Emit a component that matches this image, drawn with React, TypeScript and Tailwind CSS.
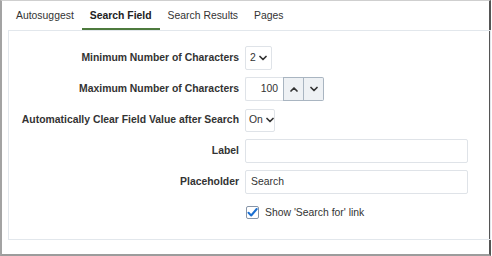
import React from "react";

const Chevron = ({ up = false }: { up?: boolean }) => (
  <svg width="8" height="6" viewBox="0 0 8 6" className="shrink-0">
    <path d={up ? "M1 5L4 2L7 5" : "M1 1.5L4 4.5L7 1.5"} fill="none" stroke="#333" strokeWidth="1.7" strokeLinecap="round" strokeLinejoin="round" />
  </svg>
);

const tabs = ["Autosuggest", "Search Field", "Search Results", "Pages"];

export default function App() {
  return (
    <div className="w-[492px] h-[256px] bg-white" style={{ fontFamily: '"Liberation Sans", Arial, sans-serif' }}>
      <div className="w-[491px] h-[256px] flex flex-col border-t border-t-[#cfcfcf] border-l-2 border-l-[#a3a3a3] border-r-2 border-r-[#555] border-b-2 border-b-[#9c9c9c] text-[10.4px] text-[#333]">
        <div className="flex h-[29px] pl-[6px]">
          {tabs.map((t) => (
            <div
              key={t}
              className={
                t === "Search Field"
                  ? "px-[8px] pt-[7px] font-bold text-[#222] border-b-2 border-[#4d7a3d]"
                  : "px-[8px] pt-[7px]"
              }
            >
              {t}
            </div>
          ))}
        </div>
        <div className="ml-[6px] mr-[-2px] h-[210px] border border-[#e2e7ec] pt-[15px]">
          <div className="grid grid-cols-[230px_223px] auto-rows-[24px] gap-x-[6px] gap-y-[7px] items-center">
            <div className="text-right font-bold">Minimum Number of Characters</div>
            <div>
              <div className="w-[27px] h-[24px] border border-[#dfe3e8] rounded-[2px] flex items-center gap-[3px] pl-[4px]">
                <span>2</span>
                <Chevron />
              </div>
            </div>

            <div className="text-right font-bold">Maximum Number of Characters</div>
            <div className="flex h-[24px]">
              <div className="w-[38px] border border-[#dfe3e8] border-r-0 rounded-l-[2px] flex items-center justify-end pr-[5px]">100</div>
              <div className="w-[21px] border border-[#a9b5c1] bg-[#eef1f4] flex items-center justify-center">
                <Chevron up />
              </div>
              <div className="w-[20px] border border-l-0 border-[#a9b5c1] bg-[#eef1f4] rounded-r-[2px] flex items-center justify-center">
                <Chevron />
              </div>
            </div>

            <div className="text-right font-bold">Automatically Clear Field Value after Search</div>
            <div>
              <div className="w-[30px] h-[23px] border border-[#dfe3e8] rounded-[2px] flex items-center gap-[3px] pl-[3px]">
                <span>On</span>
                <Chevron />
              </div>
            </div>

            <div className="text-right font-bold">Label</div>
            <div className="h-[24px] border border-[#dfe3e8] rounded-[2px]" />

            <div className="text-right font-bold">Placeholder</div>
            <div className="h-[24px] border border-[#dfe3e8] rounded-[2px] flex items-center pl-[5px]">Search</div>

            <div />
            <div className="flex items-center gap-[6px] pl-[1px]">
              <div className="w-[13px] h-[13px] border border-[#8795a8] rounded-[2px] bg-white flex items-center justify-center">
                <svg width="11" height="11" viewBox="0 0 11 11">
                  <path d="M1.5 5.8L4.2 8.5L9.7 2" fill="none" stroke="#1b6fd1" strokeWidth="2" strokeLinecap="round" strokeLinejoin="round" />
                </svg>
              </div>
              <span>Show 'Search for' link</span>
            </div>
          </div>
        </div>
      </div>
    </div>
  );
}
